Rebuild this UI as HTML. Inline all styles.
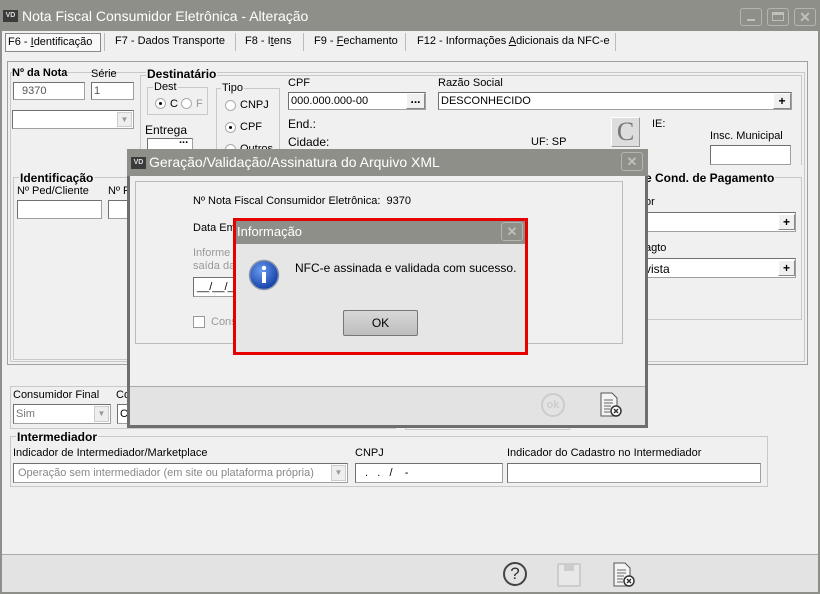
<!DOCTYPE html>
<html><head><meta charset="utf-8"><style>
*{margin:0;padding:0;box-sizing:border-box}
body{width:820px;height:594px;background:#f0f0f0;font-family:"Liberation Sans",sans-serif;font-size:11px;color:#000;position:relative;overflow:hidden}
.a{position:absolute}
.t{position:absolute;white-space:nowrap}
.b{font-weight:bold}
.f{position:absolute;background:#fff;border:1px solid #a0a0a0;border-top-color:#707070;border-left-color:#707070}
.g{position:absolute;border:1px solid #c8c8c8}
.lg{position:absolute;background:#f0f0f0;font-weight:bold;padding:0 1px;white-space:nowrap}
.btn{position:absolute;background:#f0f0f0;border:1px solid #888;border-top-color:#fff;border-left-color:#fff;text-align:center;font-weight:bold;line-height:14px;font-size:12px}
.rad{position:absolute;width:11px;height:11px;border-radius:50%;border:1px solid #aaa;background:#fff}
.dot{position:absolute;left:3px;top:3px;width:3px;height:3px;border-radius:50%;background:#000}
</style></head><body>
<div class="a" style="left:0;top:0;width:820px;height:594px;border:2px solid #8f8f8a;border-top:none"></div>
<div class="a" style="left:0;top:0;width:820px;height:31px;background:#8f8f8a"></div>
<div class="a" style="left:3px;top:10px;width:15px;height:12px;background:#3b3b3b;color:#ddd;font-size:7px;font-weight:bold;text-align:center;line-height:12px">VD</div>
<div class="t" style="left:22px;top:8px;font-size:14px;color:#fff">Nota Fiscal Consumidor Eletrônica - Alteração</div>
<div class="a" style="left:740px;top:8px;width:22px;height:18px;border:1px solid #b5b5b0;border-radius:3px"></div>
<div class="a" style="left:747px;top:19px;width:8px;height:2px;background:#c0c0bb"></div>
<div class="a" style="left:767px;top:8px;width:22px;height:18px;border:1px solid #b5b5b0;border-radius:3px"></div>
<div class="a" style="left:772px;top:12px;width:12px;height:9px;border:1px solid #c0c0bb;border-top-width:3px"></div>
<div class="a" style="left:794px;top:8px;width:22px;height:18px;border:1px solid #b5b5b0;border-radius:3px;color:#c0c0bb;font-weight:bold;font-size:14px;text-align:center;line-height:16px">✕</div>
<div class="a" style="left:5px;top:33px;width:96px;height:19px;border:1px solid #888;background:#f8f8f8"></div>
<div class="t" style="left:8px;top:36px"><span>F6 - <u>I</u>dentificação</span></div>
<div class="t" style="left:115px;top:35px">F7 - Dados Transporte</div>
<div class="t" style="left:245px;top:35px">F8 - I<u>t</u>ens</div>
<div class="t" style="left:314px;top:35px">F9 - <u>F</u>echamento</div>
<div class="t" style="left:417px;top:35px">F12 - Informações <u>A</u>dicionais da NFC-e</div>
<div class="a" style="left:104px;top:33px;width:1px;height:18px;background:#bbb"></div>
<div class="a" style="left:235px;top:33px;width:1px;height:18px;background:#bbb"></div>
<div class="a" style="left:303px;top:33px;width:1px;height:18px;background:#bbb"></div>
<div class="a" style="left:405px;top:33px;width:1px;height:18px;background:#bbb"></div>
<div class="a" style="left:615px;top:33px;width:1px;height:18px;background:#bbb"></div>
<div class="a" style="left:7px;top:61px;width:801px;height:304px;border:1px solid #a0a0a0"></div>
<div class="g" style="left:10px;top:72px;width:795px;height:290px"></div>
<div class="t b" style="left:12px;top:67px;background:#f0f0f0">Nº da Nota</div>
<div class="t" style="left:91px;top:68px">Série</div>
<div class="f" style="left:13px;top:82px;width:72px;height:18px;color:#555;padding:2px 0 0 8px">9370</div>
<div class="f" style="left:91px;top:82px;width:43px;height:18px;color:#555;padding:2px 0 0 2px">1</div>
<div class="f" style="left:12px;top:110px;width:122px;height:19px"></div>
<div class="a" style="left:117px;top:112px;width:15px;height:15px;background:#eee;border:1px solid #ccc;color:#999;font-size:8px;text-align:center;line-height:13px">▼</div>
<div class="g" style="left:140px;top:75px;width:662px;height:90px;border-bottom:none"></div>
<div class="lg" style="left:146px;top:67px;font-size:12px">Destinatário</div>
<div class="g" style="left:147px;top:87px;width:61px;height:28px"></div>
<div class="t" style="left:153px;top:81px;background:#f0f0f0;padding:0 1px">Dest</div>
<div class="rad" style="left:155px;top:98px"><div class="dot"></div></div><div class="t" style="left:170px;top:98px">C</div>
<div class="rad" style="left:181px;top:98px"></div><div class="t" style="left:196px;top:98px;color:#999">F</div>
<div class="g" style="left:216px;top:88px;width:64px;height:75px"></div>
<div class="t" style="left:221px;top:82px;background:#f0f0f0;padding:0 1px">Tipo</div>
<div class="rad" style="left:225px;top:100px"></div><div class="t" style="left:240px;top:99px">CNPJ</div>
<div class="rad" style="left:225px;top:122px"><div class="dot"></div></div><div class="t" style="left:240px;top:121px">CPF</div>
<div class="rad" style="left:225px;top:144px"></div><div class="t" style="left:240px;top:143px">Outros</div>
<div class="t" style="left:145px;top:123px;font-size:12px">Entrega</div>
<div class="f" style="left:147px;top:138px;width:46px;height:14px"></div>
<div class="t b" style="left:179px;top:134px">...</div>
<div class="t" style="left:288px;top:77px">CPF</div>
<div class="f" style="left:288px;top:92px;width:138px;height:18px;padding:2px 0 0 2px">000.000.000-00</div>
<div class="btn" style="left:406px;top:93px;width:19px;height:16px;line-height:10px">...</div>
<div class="t" style="left:438px;top:77px">Razão Social</div>
<div class="f" style="left:438px;top:92px;width:354px;height:18px;padding:2px 0 0 2px">DESCONHECIDO</div>
<div class="btn" style="left:773px;top:93px;width:18px;height:16px">+</div>
<div class="t" style="left:288px;top:117px;font-size:12px">End.:</div>
<div class="t" style="left:288px;top:135px;font-size:12px">Cidade:</div>
<div class="t" style="left:531px;top:136px">UF: SP</div>
<div class="a" style="left:611px;top:117px;width:29px;height:30px;background:#ddd;border:1px solid #999;border-top-color:#fff;border-left-color:#fff;font-family:'Liberation Serif',serif;font-size:26px;color:#777;text-align:center;line-height:28px">C</div>
<div class="t" style="left:652px;top:118px">IE:</div>
<div class="t" style="left:710px;top:130px">Insc. Municipal</div>
<div class="f" style="left:710px;top:145px;width:81px;height:20px"></div>
<div class="g" style="left:13px;top:177px;width:118px;height:183px"></div>
<div class="lg" style="left:19px;top:171px;font-size:12px">Identificação</div>
<div class="t" style="left:17px;top:185px">Nº Ped/Cliente</div>
<div class="t" style="left:108px;top:185px">Nº P</div>
<div class="f" style="left:17px;top:200px;width:85px;height:19px"></div>
<div class="f" style="left:108px;top:200px;width:30px;height:19px"></div>
<div class="g" style="left:630px;top:177px;width:172px;height:143px"></div>
<div class="lg" style="left:644px;top:171px;font-size:12px">e Cond. de Pagamento</div>
<div class="t" style="left:645px;top:196px">or</div>
<div class="f" style="left:640px;top:212px;width:156px;height:20px"></div>
<div class="btn" style="left:778px;top:214px;width:17px;height:16px">+</div>
<div class="t" style="left:645px;top:242px">agto</div>
<div class="f" style="left:640px;top:258px;width:156px;height:20px;padding:3px 0 0 4px;font-size:12px">vista</div>
<div class="btn" style="left:778px;top:260px;width:17px;height:16px">+</div>
<div class="g" style="left:10px;top:386px;width:386px;height:43px"></div>
<div class="t" style="left:13px;top:389px">Consumidor Final</div>
<div class="t" style="left:116px;top:389px">Co</div>
<div class="f" style="left:13px;top:404px;width:98px;height:20px;color:#777;padding:3px 0 0 2px">Sim</div>
<div class="a" style="left:94px;top:406px;width:15px;height:16px;background:#eee;border:1px solid #ccc;color:#999;font-size:8px;text-align:center;line-height:14px">▼</div>
<div class="f" style="left:117px;top:404px;width:20px;height:20px;padding:3px 0 0 2px">C</div>
<div class="g" style="left:405px;top:386px;width:165px;height:44px;border-top:none"></div>
<div class="g" style="left:10px;top:436px;width:758px;height:51px"></div>
<div class="lg" style="left:16px;top:430px;font-size:12px">Intermediador</div>
<div class="t" style="left:13px;top:447px">Indicador de Intermediador/Marketplace</div>
<div class="f" style="left:13px;top:463px;width:335px;height:20px;color:#888;padding:3px 0 0 4px">Operação sem intermediador (em site ou plataforma própria)</div>
<div class="a" style="left:331px;top:465px;width:15px;height:16px;background:#eee;border:1px solid #ccc;color:#999;font-size:8px;text-align:center;line-height:14px">▼</div>
<div class="t" style="left:355px;top:447px">CNPJ</div>
<div class="f" style="left:355px;top:463px;width:148px;height:20px;padding:3px 0 0 6px">&nbsp;.&nbsp;&nbsp;&nbsp;.&nbsp;&nbsp;&nbsp;/&nbsp;&nbsp;&nbsp;&nbsp;-</div>
<div class="t" style="left:507px;top:447px">Indicador do Cadastro no Intermediador</div>
<div class="f" style="left:507px;top:463px;width:254px;height:20px"></div>
<div class="a" style="left:2px;top:554px;width:816px;height:38px;background:#e3e3e3;border-top:1px solid #aaa"></div>
<div class="a" style="left:503px;top:562px;width:24px;height:24px;border:2px solid #444;border-radius:50%;text-align:center;font-size:17px;line-height:20px;color:#333">?</div>
<div class="a" style="left:557px;top:563px;width:24px;height:24px;border:2px solid #ccc;border-radius:2px;background:#e8e8e8"></div>
<div class="a" style="left:564px;top:563px;width:10px;height:8px;background:#ccc"></div>
<svg class="a" style="left:612px;top:562px" width="24" height="26"><path d="M2 1h11l5 5v18H2z" fill="#f4f4f4" stroke="#555"/><path d="M5 8h9M5 11h9M5 14h7M5 17h6M5 20h6" stroke="#666"/><circle cx="17" cy="19" r="5" fill="#fff" stroke="#333" stroke-width="1.5"/><path d="M15 17l4 4M19 17l-4 4" stroke="#333" stroke-width="1.5"/></svg>
<div class="a" style="left:127px;top:149px;width:521px;height:279px;background:#f0f0f0;border:3px solid #6e6e6e;border-top:none"></div>
<div class="a" style="left:127px;top:149px;width:521px;height:27px;background:#8f8f8a"></div>
<div class="a" style="left:131px;top:157px;width:15px;height:12px;background:#3b3b3b;color:#ddd;font-size:7px;font-weight:bold;text-align:center;line-height:12px">VD</div>
<div class="t" style="left:149px;top:154px;font-size:14px;color:#fff">Geração/Validação/Assinatura do Arquivo XML</div>
<div class="a" style="left:621px;top:152px;width:22px;height:19px;border:1px solid #b5b5b0;border-radius:3px;color:#c0c0bb;font-weight:bold;font-size:13px;text-align:center;line-height:17px">✕</div>
<div class="g" style="left:135px;top:181px;width:488px;height:163px;border-color:#bbb"></div>
<div class="t" style="left:193px;top:195px">Nº Nota Fiscal Consumidor Eletrônica:&nbsp; 9370</div>
<div class="t" style="left:193px;top:222px">Data Em</div>
<div class="t" style="left:193px;top:247px;color:#999">Informe</div>
<div class="t" style="left:193px;top:260px;color:#999">saída da</div>
<div class="f" style="left:193px;top:277px;width:45px;height:20px;padding:3px 0 0 3px">__/__/_</div>
<div class="a" style="left:193px;top:316px;width:12px;height:12px;border:1px solid #999;background:#fff"></div>
<div class="t" style="left:211px;top:316px;color:#999">Cons</div>
<div class="a" style="left:130px;top:386px;width:515px;height:39px;background:#e3e3e3;border-top:1px solid #aaa"></div>
<div class="a" style="left:541px;top:393px;width:24px;height:24px;border:2px solid #ccc;border-radius:50%;color:#ccc;font-weight:bold;font-size:11px;text-align:center;line-height:20px">ok</div>
<svg class="a" style="left:599px;top:392px" width="24" height="26"><path d="M2 1h11l5 5v18H2z" fill="#f4f4f4" stroke="#555"/><path d="M5 8h9M5 11h9M5 14h7M5 17h6M5 20h6" stroke="#666"/><circle cx="17" cy="19" r="5" fill="#fff" stroke="#333" stroke-width="1.5"/><path d="M15 17l4 4M19 17l-4 4" stroke="#333" stroke-width="1.5"/></svg>
<div class="a" style="left:233px;top:218px;width:295px;height:137px;border:3px solid #e60000;background:#e6e6e6"></div>
<div class="a" style="left:236px;top:221px;width:289px;height:23px;background:#8f8f8a"></div>
<div class="t" style="left:237px;top:224px;font-size:13px;color:#fff">Informação</div>
<div class="a" style="left:501px;top:222px;width:22px;height:19px;border:1px solid #b5b5b0;border-radius:3px;color:#c0c0bb;font-weight:bold;font-size:13px;text-align:center;line-height:17px">✕</div>
<svg class="a" style="left:248px;top:259px" width="32" height="32"><defs><radialGradient id="r" cx="40%" cy="35%" r="65%"><stop offset="0" stop-color="#6a9cf0"/><stop offset="1" stop-color="#1340a8"/></radialGradient></defs><circle cx="16" cy="16" r="14.5" fill="url(#r)" stroke="#8894aa" stroke-width="1.5"/><circle cx="16" cy="9" r="2.2" fill="#fff"/><rect x="14" y="13" width="4" height="11" fill="#fff"/></svg>
<div class="t" style="left:295px;top:261px;font-size:12px">NFC-e assinada e validada com sucesso.</div>
<div class="a" style="left:343px;top:310px;width:75px;height:26px;border:1px solid #777;border-radius:2px;background:linear-gradient(#d8d8d8,#bdbdbd);text-align:center;line-height:24px;font-size:12px">OK</div>
</body></html>
